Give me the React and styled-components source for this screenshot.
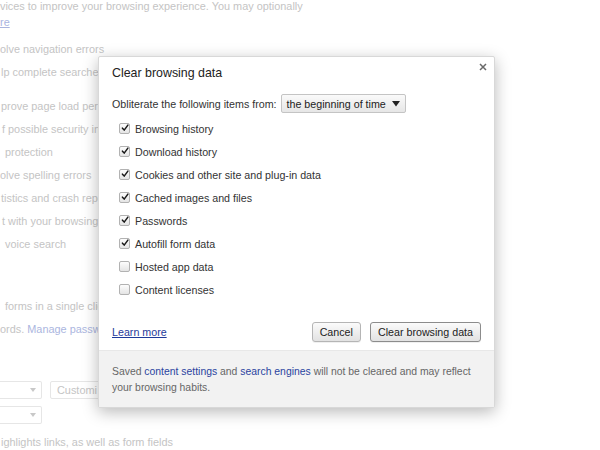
import styled, { createGlobalStyle } from "styled-components";

const Global = createGlobalStyle`
  html, body { margin: 0; padding: 0; background: #fff; }
  body { font-family: "Liberation Sans", Arial, sans-serif; font-size: 10.7px; color: #333; }
`;

const items = [
  { label: "Browsing history", checked: true },
  { label: "Download history", checked: true },
  { label: "Cookies and other site and plug-in data", checked: true },
  { label: "Cached images and files", checked: true },
  { label: "Passwords", checked: true },
  { label: "Autofill form data", checked: true },
  { label: "Hosted app data", checked: false },
  { label: "Content licenses", checked: false },
];

function Check({ checked }) {
  return (
    <CheckBox>
      {checked && (
        <svg width="10" height="10" viewBox="0 0 10 10">
          <path d="M1.8 5.2 L4 7.6 L8.6 1.4" fill="none" stroke="#1a1a1a" strokeWidth="1.9" strokeLinecap="round" strokeLinejoin="round" />
        </svg>
      )}
    </CheckBox>
  );
}

function App() {
  return (
    <>
      <Global />
      <Page>
        <Para>
          <div>vices to improve your browsing experience. You may optionally</div>
          <FadedLink>re</FadedLink>
        </Para>
        <Group $top={8}>
          <Line>olve navigation errors</Line>
          <Line $indent={1}>lp complete searche</Line>
        </Group>
        <Group $top={11}>
          <Line $indent={1}>prove page load perf</Line>
          <Line $indent={2}>f possible security in</Line>
          <Line $indent={5}>protection</Line>
          <Line>olve spelling errors</Line>
          <Line $indent={1}>tistics and crash repo</Line>
          <Line $indent={2}>t with your browsing</Line>
          <Line $indent={5}>voice search</Line>
        </Group>
        <Group $top={39}>
          <Line $indent={5}>forms in a single clic</Line>
          <Line>ords. <PaleBlue>Manage passw</PaleBlue></Line>
        </Group>
        <Controls>
          <SelectRow>
            <GhostSelect><Caret /></GhostSelect>
            <GhostButton>Customi</GhostButton>
          </SelectRow>
          <SelectRow>
            <GhostSelect><Caret /></GhostSelect>
          </SelectRow>
        </Controls>
        <Line $indent={1}>ighlights links, as well as form fields</Line>

        <Dialog>
          <Header>
            <Title>Clear browsing data</Title>
            <Close>
              <svg width="8" height="8" viewBox="0 0 8 8">
                <path d="M1 1 L7 7 M7 1 L1 7" stroke="#6a6a6a" strokeWidth="1.5" />
              </svg>
            </Close>
          </Header>
          <Body>
            <FromRow>
              <span>Obliterate the following items from:</span>
              <Select>
                the beginning of time
                <svg width="8" height="6" viewBox="0 0 8 6">
                  <path d="M0 0 L8 0 L4 5.5 Z" fill="#222" />
                </svg>
              </Select>
            </FromRow>
            <List>
              {items.map((it) => (
                <Item key={it.label}>
                  <Check checked={it.checked} />
                  <span>{it.label}</span>
                </Item>
              ))}
            </List>
            <Actions>
              <LearnMore href="#">Learn more</LearnMore>
              <Buttons>
                <Button>Cancel</Button>
                <Button $primary>Clear browsing data</Button>
              </Buttons>
            </Actions>
          </Body>
          <Footer>
            Saved <Link href="#">content settings</Link> and <Link href="#">search engines</Link> will not be cleared and may reflect
            <br />
            your browsing habits.
          </Footer>
        </Dialog>
      </Page>
    </>
  );
}

export default App;

const Page = styled.div`
  position: relative;
  width: 600px;
  height: 450px;
  overflow: hidden;
  background: #fff;
  color: #c4c4c4;
  font-size: 10.9px;
`;

const Para = styled.div`
  margin-top: -2px;
  line-height: 16px;
  white-space: nowrap;
`;

const FadedLink = styled.span`
  color: #a9b4df;
  text-decoration: underline;
`;

const PaleBlue = styled.span`
  color: #abb6e0;
`;

const Group = styled.div`
  margin-top: ${(p) => p.$top}px;
  display: flex;
  flex-direction: column;
`;

const Line = styled.div`
  height: 23px;
  line-height: 23px;
  padding-left: ${(p) => p.$indent || 0}px;
  white-space: nowrap;
`;

const Controls = styled.div`
  margin-top: 40px;
  margin-bottom: 7px;
  display: flex;
  flex-direction: column;
  gap: 7px;
`;

const SelectRow = styled.div`
  display: flex;
  gap: 6px;
  height: 18px;
`;

const GhostSelect = styled.div`
  flex: none;
  width: 44px;
  margin-left: -2px;
  border: 1px solid #e6e6e6;
  border-left: none;
  border-radius: 2px;
  display: flex;
  align-items: center;
  justify-content: flex-end;
  padding-right: 5px;
  box-sizing: border-box;
`;

const Caret = styled.span`
  width: 0;
  height: 0;
  border-left: 3px solid transparent;
  border-right: 3px solid transparent;
  border-top: 4px solid #c8c8c8;
`;

const GhostButton = styled.div`
  width: 60px;
  border: 1px solid #e6e6e6;
  border-radius: 2px;
  padding: 0 6px;
  line-height: 16px;
  white-space: nowrap;
  margin-left: 2px;
`;

const Dialog = styled.div`
  position: absolute;
  left: 98px;
  top: 56px;
  width: 397px;
  height: 352px;
  box-sizing: border-box;
  background: #fff;
  color: #333;
  font-size: 10.7px;
  border: 1px solid #d8d8d8;
  border-radius: 2px;
  box-shadow: 0 4px 16px rgba(0, 0, 0, 0.28);
  display: flex;
  flex-direction: column;
  overflow: hidden;
`;

const Header = styled.div`
  position: relative;
  padding: 8px 13px 0;
  height: 16px;
`;

const Title = styled.div`
  font-size: 12.4px;
  line-height: 16px;
  color: #222;
`;

const Close = styled.div`
  position: absolute;
  right: 7px;
  top: 6px;
  width: 8px;
  height: 8px;
  display: flex;
`;

const Body = styled.div`
  flex: 1;
  padding: 13px 13px 0;
  display: flex;
  flex-direction: column;
`;

const FromRow = styled.div`
  display: flex;
  align-items: center;
  gap: 4px;
  height: 19px;
`;

const Select = styled.div`
  height: 19px;
  box-sizing: border-box;
  border: 1px solid #c4c4c4;
  border-radius: 2px;
  background: linear-gradient(#fafafa, #e6e6e6);
  padding: 0 5px;
  display: flex;
  align-items: center;
  gap: 6px;
  color: #222;
`;

const List = styled.div`
  margin-top: 4px;
  display: flex;
  flex-direction: column;
`;

const Item = styled.label`
  height: 23px;
  display: flex;
  align-items: center;
  gap: 5px;
  padding-left: 7px;
`;

const CheckBox = styled.span`
  width: 11px;
  height: 11px;
  box-sizing: border-box;
  border: 1px solid #b2b2b2;
  border-radius: 2px;
  background: linear-gradient(#fdfdfd, #e4e4e4);
  display: flex;
  align-items: center;
  justify-content: center;
  svg { margin-top: -1px; margin-left: 1px; }
`;

const Actions = styled.div`
  margin-top: 21px;
  display: flex;
  align-items: center;
  justify-content: space-between;
`;

const LearnMore = styled.a`
  color: #1f3a9a;
  text-decoration: underline;
`;

const Buttons = styled.div`
  display: flex;
  gap: 9px;
`;

const Button = styled.button`
  font: inherit;
  height: 20px;
  padding: 0 7px;
  color: #222;
  border: 1px solid ${(p) => (p.$primary ? "#8c8c8c" : "#b5b5b5")};
  border-radius: 3px;
  background: linear-gradient(#fbfbfb, #e2e2e2);
  box-shadow: 0 1px 0 rgba(0, 0, 0, 0.06);
`;

const Footer = styled.div`
  height: 57px;
  box-sizing: border-box;
  padding: 13px 13px 0;
  background: #f2f2f2;
  border-top: 1px solid #e8e8e8;
  line-height: 16px;
  font-size: 10.4px;
  color: #666;
  white-space: nowrap;
`;

const Link = styled.a`
  color: #2a44a0;
  text-decoration: none;
`;
